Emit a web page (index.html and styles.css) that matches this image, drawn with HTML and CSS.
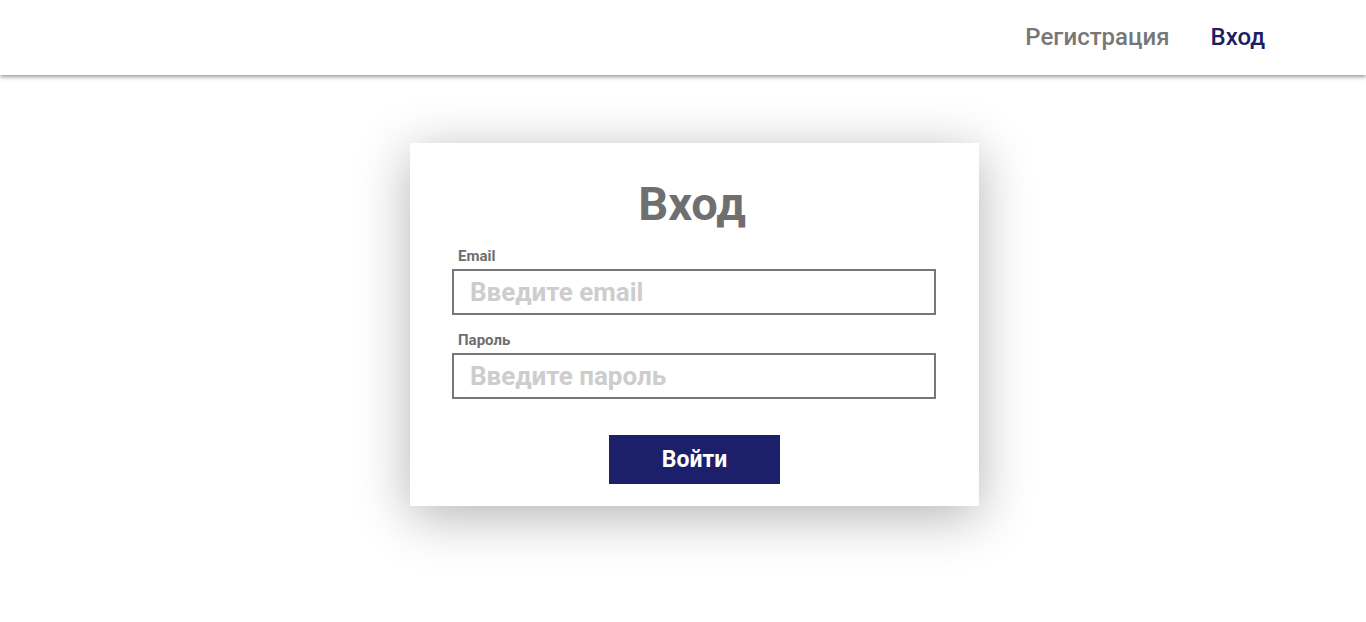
FILE: index.html
```html
<!DOCTYPE html>
<html lang="ru">
<head>
<meta charset="utf-8">
<title>Вход</title>
<link rel="stylesheet" href="styles.css">
</head>
<body>
<header class="header">
  <nav class="nav">
    <a class="nav-link" href="#">Регистрация</a>
    <a class="nav-link nav-link-active" href="#">Вход</a>
  </nav>
</header>
<main class="main">
  <form class="card">
    <h1 class="card-title">Вход</h1>
    <div class="field">
      <label class="field-label">Email</label>
      <input class="field-input" type="email" placeholder="Введите email">
    </div>
    <div class="field">
      <label class="field-label">Пароль</label>
      <input class="field-input" type="password" placeholder="Введите пароль">
    </div>
    <div class="actions">
      <button class="btn" type="button">Войти</button>
    </div>
  </form>
</main>
</body>
</html>
```
FILE: styles.css
```css
* { box-sizing: border-box; }
html, body { margin: 0; padding: 0; background: #fff; }
body { font-family: Roboto, "Liberation Sans", sans-serif; min-height: 100vh; }

.header {
  height: 75px;
  background: #fff;
  box-shadow: 0 2px 4px rgba(0,0,0,0.4);
  display: flex;
  justify-content: flex-end;
  align-items: center;
  padding-right: 101px;
  position: relative;
  z-index: 1;
}
.nav { display: flex; gap: 41px; align-items: center; margin-top: -2px; }
.nav-link {
  font-size: 24px;
  font-weight: 500;
  color: #777;
  text-decoration: none;
}
.nav-link-active { color: #1c1f63; }

.main {
  display: flex;
  justify-content: center;
  padding-top: 68px;
}
.card {
  width: 569px;
  height: 363px;
  background: #fff;
  box-shadow: 0 10px 50px rgba(0,0,0,0.3);
  padding: 30px 42px 0 42px;
  display: flex;
  flex-direction: column;
  margin-left: 23px;
}
.card-title {
  margin: 0 0 12px;
  text-align: center;
  font-size: 47px;
  font-weight: 700;
  color: #6f6f6f;
  line-height: 62px;
  padding-right: 5px;
}
.field { display: flex; flex-direction: column; margin-bottom: 16px; }
.field-label {
  font-size: 15px;
  font-weight: 700;
  color: #6e6e6e;
  padding-left: 6px;
  line-height: 17px;
  margin-bottom: 4px;
  margin-top: 1px;
}
.field-input {
  width: 484px;
  height: 46px;
  border: 2px solid #777;
  padding: 0 16px;
  font-family: Roboto, "Liberation Sans", sans-serif;
  font-size: 26px;
  font-weight: 700;
  color: #444;
  outline: none;
}
.field-input::placeholder { color: #cdcdcd; }
.actions { display: flex; justify-content: center; margin-top: 20px; }
.btn {
  width: 171px;
  height: 49px;
  background: #1c1f6a;
  color: #fff;
  border: none;
  font-family: Roboto, "Liberation Sans", sans-serif;
  font-size: 23px;
  font-weight: 700;
  cursor: pointer;
}
```
